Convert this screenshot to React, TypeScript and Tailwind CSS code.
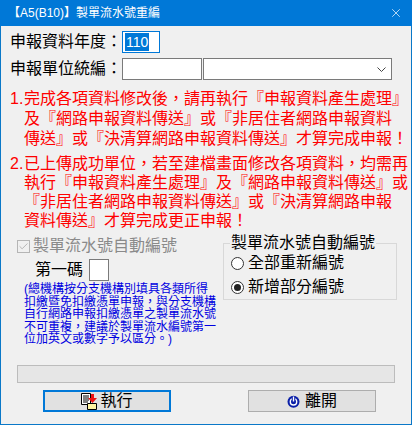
import {Check, X} from 'lucide-react';
import type {ReactNode} from 'react';

const FONT = "font-['Liberation_Sans','Noto_Sans_CJK_TC',sans-serif]";

function Radio({checked, children}: {checked?: boolean; children: ReactNode}) {
  return (
    <div className="flex items-center gap-[4px] h-[24px] text-[16px] leading-[20px] text-black">
      <span className="flex items-center justify-center w-[13px] h-[13px] rounded-full border border-[#333] bg-white">
        {checked && <span className="w-[7px] h-[7px] rounded-full bg-[#222]"/>}
      </span>
      {children}
    </div>
  );
}

function RunIcon() {
  return (
    <svg width="16" height="17" viewBox="0 0 16 17" className="shrink-0">
      <path d="M.5.5h9v11h-9z" fill="#fff" stroke="#000"/>
      <path d="M2 3h6M2 5h6M2 7h6M2 9h5" stroke="#000"/>
      <path d="M6.5 10.500h9v6h-9z" fill="#fff3a0" stroke="#000"/>
      <path d="M10 1h3v4h3l-4.500 5L7 5h3z" fill="#ee1111"/>
    </svg>
  );
}

function PowerIcon() {
  return (
    <svg width="13" height="13" viewBox="0 0 13 13" className="shrink-0">
      <circle cx="6.500" cy="6.800" r="6" fill="#0a1fa8"/>
      <circle cx="6.500" cy="6.800" r="3.200" fill="none" stroke="#fff" strokeWidth="1.400"/>
      <path d="M6.500 1v5.500" stroke="#0a1fa8" strokeWidth="3.500"/>
      <path d="M6.500 1.500v5" stroke="#fff" strokeWidth="1.400"/>
    </svg>
  );
}

export default function App() {
  return (
    <div className={`${FONT} w-[414px] h-[425px] bg-white`}>
      <div className="flex flex-col w-[412px] h-[425px] bg-[#f0f0f0] border-x border-b border-[#0a78c8]">
        <div className="flex items-center justify-between h-[26px] -mx-px pl-[8px] pr-[9px] bg-[#0078d7] text-white text-[12px]">
          <span>【A5(B10)】製單流水號重編</span>
          <X size={14} strokeWidth={1.2}/>
        </div>

        <div className="flex flex-col gap-[5px] pt-[5px] pl-[9px] text-[16px] leading-[22px] text-black">
          <div className="flex items-center">
            <span>申報資料年度：</span>
            <span className="flex items-center w-[38px] h-[22px] pl-[2px] border border-[#0078d7] bg-white">
              <span className="bg-[#0078d7] text-white text-[14px] leading-[18px] px-px">110</span>
            </span>
          </div>
          <div className="flex items-center gap-px">
            <span className="-mr-px">申報單位統編：</span>
            <span className="w-[80px] h-[22px] border border-[#7a7a7a] bg-white"/>
            <span className="flex items-center justify-end w-[189px] h-[22px] pr-[5px] border border-[#7a7a7a] bg-white">
              <svg width="9" height="5" viewBox="0 0 9 5"><path d="M.5.500l4 4 4-4" fill="none" stroke="#444"/></svg>
            </span>
          </div>
        </div>

        <div className="flex flex-col gap-[5px] pt-[9px] pl-[7px] text-[16px] leading-[20px] text-[#ff0000] whitespace-nowrap">
          <div className="flex flex-col">
            <span><span className="inline-block w-[16px] pl-[2px]">1.</span>完成各項資料修改後，請再執行『申報資料產生處理』</span>
            <span className="pl-[16px]">及『網路申報資料傳送』或『非居住者網路申報資料</span>
            <span className="pl-[16px]">傳送』或『決清算網路申報資料傳送』才算完成申報！</span>
          </div>
          <div className="flex flex-col leading-[19px]">
            <span><span className="inline-block w-[16px] pl-[2px]">2.</span>已上傳成功單位，若至建檔畫面修改各項資料，均需再</span>
            <span className="pl-[16px]">執行『申報資料產生處理』及『網路申報資料傳送』或</span>
            <span className="pl-[16px]">『非居住者網路申報資料傳送』或『決清算網路申報</span>
            <span className="pl-[16px]">資料傳送』才算完成更正申報！</span>
          </div>
        </div>

        <div className="flex gap-[6px] pt-[5px] pl-[16px]">
          <div className="flex flex-col w-[200px]">
            <div className="flex items-center gap-[3px] h-[22px] text-[16px] text-[#8a8a8a]">
              <span className="flex items-center justify-center w-[13px] h-[13px] border border-[#b5b5b5] bg-[#f0f0f0]">
                <Check size={11} strokeWidth={2} className="text-[#b0b0b0]"/>
              </span>
              製單流水號自動編號
            </div>
            <div className="flex items-center gap-[6px] pl-[18px] h-[24px] mt-[1px] text-[16px] text-black">
              第一碼
              <span className="w-[20px] h-[22px] border border-[#7a7a7a] bg-white"/>
            </div>
            <div className="mt-[1px] ml-[7px] text-[12px] leading-[12.500px] text-[#0000e0] whitespace-nowrap">
              <div>(總機構按分支機構別填具各類所得</div>
              <div>扣繳暨免扣繳憑單申報，與分支機構</div>
              <div>自行網路申報扣繳憑單之製單流水號</div>
              <div>不可重複，建議於製單流水編號第一</div>
              <div>位加英文或數字予以區分。)</div>
            </div>
          </div>
          <div className="relative w-[174px] h-[57px] mt-[8px] pl-[7px] border border-[#d8d8d8]">
            <span className="absolute -top-[11px] left-[6px] px-px bg-[#f0f0f0] text-[16px] leading-[20px] text-black">製單流水號自動編號</span>
            <div className="pt-[7px]">
              <Radio>全部重新編號</Radio>
              <Radio checked>新增部分編號</Radio>
            </div>
          </div>
        </div>

        <div className="h-[18px] mt-auto mx-[16px] border border-[#bcbcbc] bg-[#e6e6e6]"/>

        <div className="flex justify-between pt-[7px] pb-[12px] pl-[42px] pr-[35px] text-[16px] text-black">
          <div className="flex items-center justify-center gap-[3px] w-[128px] h-[22px] border-2 border-[#0078d7] bg-[#e1e1e1]">
            <RunIcon/>
            執行
          </div>
          <div className="flex items-center justify-center gap-[5px] w-[128px] h-[22px] border border-[#adadad] bg-[#e1e1e1]">
            <PowerIcon/>
            離開
          </div>
        </div>
      </div>
    </div>
  );
}
